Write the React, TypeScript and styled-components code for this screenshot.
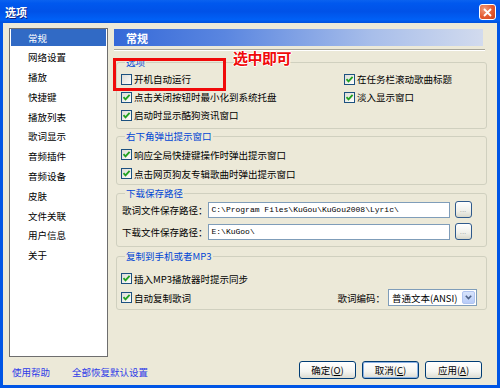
import styled, { createGlobalStyle } from "styled-components"

const GlobalStyle = createGlobalStyle`
  html, body {
    margin: 0;
    padding: 0;
    background: #ECE9D8;
  }
  * {
    box-sizing: border-box;
  }
`

const font = `"Noto Sans CJK SC", "Liberation Sans", sans-serif`

const menuItems = [
  "常规", "网络设置", "播放", "快捷键", "播放列表", "歌词显示",
  "音频插件", "音频设备", "皮肤", "文件关联", "用户信息", "关于",
]

const CheckMark = () => (
  <svg width="9" height="9" viewBox="0 0 9 9">
    <path d="M1.5 4.2 L3.5 6.4 L7.6 1.8" fill="none" stroke="#21A121" strokeWidth="1.8" />
  </svg>
)

const Check = ({ label, checked }: { label: string; checked?: boolean }) => (
  <CheckRow>
    <Box>{checked && <CheckMark />}</Box>
    <span>{label}</span>
  </CheckRow>
)

export default function App() {
  return (
    <>
      <GlobalStyle />
      <Window>
        <TitleBar>
          <Title>选项</Title>
          <CloseButton>
            <svg width="9" height="9" viewBox="0 0 9 9">
              <path d="M1 1 L8 8 M8 1 L1 8" stroke="#fff" strokeWidth="1.8" />
            </svg>
          </CloseButton>
        </TitleBar>
        <Frame>
          <Body>
            <Main>
              <SideList>
                {menuItems.map((m, i) => (
                  <SideItem key={m} $active={i === 0}>{m}</SideItem>
                ))}
              </SideList>
              <Content>
                <PanelHeader>常规</PanelHeader>
                <Divider />
                <Group $top={5} $pt={2} $pb={4}>
                  <legend>选项</legend>
                  <OptionGrid>
                    <Check label="开机自动运行" />
                    <Check label="在任务栏滚动歌曲标题" checked />
                    <Check label="点击关闭按钮时最小化到系统托盘" checked />
                    <Check label="淡入显示窗口" checked />
                    <Check label="启动时显示酷狗资讯窗口" checked />
                  </OptionGrid>
                </Group>
                <Group $top={1} $pt={3} $pb={1} $row={19}>
                  <legend>右下角弹出提示窗口</legend>
                  <Check label="响应全局快捷键操作时弹出提示窗口" checked />
                  <Check label="点击网页狗友专辑歌曲时弹出提示窗口" checked />
                </Group>
                <Group $top={2} $pt={0} $pb={3}>
                  <legend>下载保存路径</legend>
                  <PathRow>
                    <span>歌词文件保存路径：</span>
                    <PathInput>C:\Program Files\KuGou\KuGou2008\Lyric\</PathInput>
                    <BrowseButton>...</BrowseButton>
                  </PathRow>
                  <PathRow>
                    <span>下载文件保存路径：</span>
                    <PathInput>E:\KuGoo\</PathInput>
                    <BrowseButton>...</BrowseButton>
                  </PathRow>
                </Group>
                <Group $top={3} $pt={7} $pb={2} $row={19}>
                  <legend>复制到手机或者MP3</legend>
                  <Check label="插入MP3播放器时提示同步" checked />
                  <SyncRow>
                    <Check label="自动复制歌词" checked />
                    <EncodeLabel>歌词编码：</EncodeLabel>
                    <Select>
                      <span>普通文本(ANSI)</span>
                      <SelectArrow>
                        <svg width="7" height="5" viewBox="0 0 7 5">
                          <path d="M0.8 0.8 L3.5 3.6 L6.2 0.8" fill="none" stroke="#4D6185" strokeWidth="1.6" />
                        </svg>
                      </SelectArrow>
                    </Select>
                  </SyncRow>
                </Group>
              </Content>
            </Main>
            <Footer>
              <Link>使用帮助</Link>
              <Link>全部恢复默认设置</Link>
              <Buttons>
                <DialogButton>确定(<u>O</u>)</DialogButton>
                <DialogButton $focus>取消(<u>C</u>)</DialogButton>
                <DialogButton>应用(<u>A</u>)</DialogButton>
              </Buttons>
            </Footer>
          </Body>
        </Frame>
        <Annotation />
        <AnnotationText>选中即可</AnnotationText>
      </Window>
    </>
  )
}

const Window = styled.div`
  position: relative;
  width: 500px;
  height: 388px;
  display: flex;
  flex-direction: column;
  font-family: ${font};
  font-size: 9.5px;
  color: #000;
`

const TitleBar = styled.div`
  height: 23px;
  flex: 0 0 23px;
  display: flex;
  align-items: center;
  justify-content: space-between;
  padding: 0 4px 0 5px;
  background: linear-gradient(180deg, #0A62F0 0%, #0058EE 15%, #0052E8 50%, #0060F6 85%, #0050DC 100%);
`

const Title = styled.div`
  color: #fff;
  font-weight: 700;
  font-size: 11px;
  text-shadow: 1px 1px 0 #0A1E80;
`

const CloseButton = styled.div`
  width: 17px;
  height: 16px;
  margin-top: 1px;
  display: flex;
  align-items: center;
  justify-content: center;
  border: 1px solid #fff;
  border-radius: 3px;
  background: radial-gradient(circle at 30% 30%, #F09C7C 0%, #E45A30 55%, #C8401C 100%);
`

const Frame = styled.div`
  flex: 1;
  display: flex;
  padding: 0 3px 3px;
  background: #0055E5;
`

const Body = styled.div`
  flex: 1;
  display: flex;
  flex-direction: column;
  background: #ECE9D8;
`

const Main = styled.div`
  display: flex;
  padding: 5px 0 0 6px;
  gap: 6px;
`

const SideList = styled.div`
  width: 99px;
  height: 329px;
  background: #fff;
  border: 1px solid #6E6E6E;
  padding: 0 1px;
  display: flex;
  flex-direction: column;
  gap: 2.8px;
`

const SideItem = styled.div<{ $active?: boolean }>`
  height: 17px;
  display: flex;
  align-items: center;
  padding-left: 17px;
  background: ${p => (p.$active ? "#316AC5" : "transparent")};
  color: ${p => (p.$active ? "#fff" : "#000")};
`

const Content = styled.div`
  width: 373px;
  display: flex;
  flex-direction: column;
`

const PanelHeader = styled.div`
  width: 369px;
  height: 17px;
  margin-top: 1px;
  padding-left: 12px;
  display: flex;
  align-items: center;
  color: #fff;
  font-weight: 700;
  font-size: 11px;
  background: linear-gradient(90deg, #3569D8 0%, #5A86E0 30%, #A8BEEA 70%, #D2DBEE 100%);
`

const Divider = styled.div`
  width: 371px;
  height: 2px;
  margin-top: 3px;
  border-top: 1px solid #A7A69A;
  border-bottom: 1px solid #fff;
`

const Group = styled.fieldset<{ $top: number; $pt: number; $pb: number; $row?: number }>`
  margin: ${p => p.$top}px 0 0 2px;
  width: 371px;
  padding: ${p => p.$pt}px 4px ${p => p.$pb}px 4px;
  border: 1px solid #D0D0BF;
  border-radius: 3px;
  min-width: 0;

  legend {
    color: #0046D5;
    padding: 0 1px;
    margin-left: 4px;
    line-height: 12px;
    height: 12px;
  }

  & > div {
    height: ${p => p.$row ?? 18}px;
  }
`

const OptionGrid = styled.div`
  display: grid;
  grid-template-columns: 223px 1fr;
  grid-auto-rows: 18px;
  height: auto !important;
`

const CheckRow = styled.div`
  display: flex;
  align-items: center;
  gap: 2px;
  white-space: nowrap;
`

const Box = styled.span`
  width: 11px;
  height: 11px;
  flex: 0 0 11px;
  border: 1px solid #1C5180;
  background: linear-gradient(135deg, #DCDCD7 0%, #F4F4F0 70%, #FFFFFF 100%);
  display: flex;
  align-items: center;
  justify-content: center;
`

const PathRow = styled.div`
  display: flex;
  align-items: center;
  height: 21px !important;
  margin-bottom: 1px;
  padding-left: 1px;
`

const PathInput = styled.div`
  width: 242px;
  height: 16px;
  border: 1px solid #7F9DB9;
  background: #fff;
  padding-left: 3px;
  display: flex;
  align-items: center;
  font-family: "Liberation Mono", monospace;
  font-size: 8px;
  white-space: nowrap;
  overflow: hidden;
`

const BrowseButton = styled.div`
  width: 17px;
  height: 17px;
  margin-left: 5px;
  border: 1px solid #2F5A8C;
  border-radius: 3px;
  background: linear-gradient(180deg, #FFFFFF 0%, #F0F0EA 60%, #D8D8CC 100%);
  color: #A0A0A0;
  font-family: "Liberation Sans", sans-serif;
  font-size: 8px;
  display: flex;
  align-items: center;
  justify-content: center;
  line-height: 1;
`

const SyncRow = styled.div`
  display: flex;
  align-items: center;
  padding-right: 5px;
`

const EncodeLabel = styled.span`
  margin-left: auto;
  margin-right: 3px;
`

const Select = styled.div`
  width: 89px;
  height: 17px;
  border: 1px solid #7F9DB9;
  background: #fff;
  display: flex;
  align-items: center;
  justify-content: space-between;
  padding: 1px 1px 1px 3px;
`

const SelectArrow = styled.span`
  width: 13px;
  height: 13px;
  display: flex;
  align-items: center;
  justify-content: center;
  border-radius: 2px;
  background: linear-gradient(180deg, #D8E4FC 0%, #B8CCF8 100%);
  border: 1px solid #B0C4F0;
`

const Footer = styled.div`
  display: flex;
  align-items: center;
  height: 18px;
  margin-top: 4px;
  padding: 0 15px 0 9px;
`

const Link = styled.span`
  color: #2E3BE8;
  margin-right: 22px;
  padding-top: 4px;
`

const Buttons = styled.div`
  margin-left: auto;
  display: flex;
  gap: 6px;
`

const DialogButton = styled.div<{ $focus?: boolean }>`
  width: 57px;
  height: 18px;
  border: 1px solid #003C74;
  border-radius: 3px;
  background: linear-gradient(180deg, #FFFFFF 0%, #F4F4F0 60%, #DCDCD2 100%);
  box-shadow: ${p => (p.$focus ? "inset 0 0 0 1px #8DB2E3" : "none")};
  display: flex;
  align-items: center;
  justify-content: center;

  u {
    text-decoration: underline;
  }
`

const Annotation = styled.div`
  position: absolute;
  left: 113px;
  top: 58px;
  width: 113px;
  height: 33px;
  border: 3px solid #F00A0A;
`

const AnnotationText = styled.div`
  position: absolute;
  left: 233px;
  top: 47px;
  font-size: 15px;
  font-weight: 700;
  color: #F00A0A;
  letter-spacing: -0.5px;
  text-shadow: 1px 0 0 #fff, -1px 0 0 #fff, 0 1px 0 #fff, 0 -1px 0 #fff;
`
